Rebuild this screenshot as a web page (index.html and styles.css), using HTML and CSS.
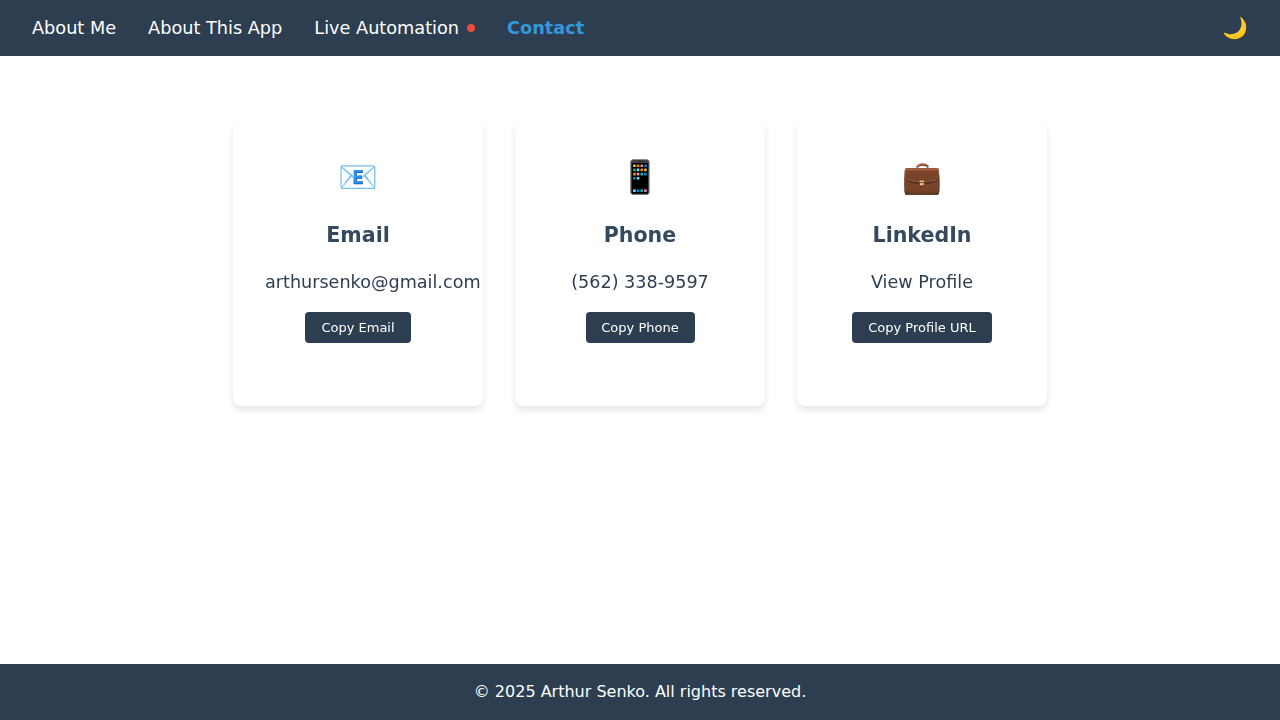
FILE: index.html
```html
<!DOCTYPE html>
<html lang="en">
<head>
<meta charset="utf-8">
<title>Contact</title>
<link rel="stylesheet" href="styles.css">
</head>
<body>
<nav class="navbar">
  <ul class="nav-links">
    <li><a class="nav-link" href="#">About Me</a></li>
    <li><a class="nav-link" href="#">About This App</a></li>
    <li><a class="nav-link" href="#">Live Automation<span class="status-dot"></span></a></li>
    <li><a class="nav-link active" href="#">Contact</a></li>
  </ul>
  <button class="theme-toggle">🌙</button>
</nav>
<main class="content">
  <div class="cards">
    <section class="card">
      <div class="card-icon">📧</div>
      <h3 class="card-title">Email</h3>
      <a class="card-value" href="#">arthursenko@gmail.com</a>
      <button class="copy-button copy-email">Copy Email</button>
    </section>
    <section class="card">
      <div class="card-icon">📱</div>
      <h3 class="card-title">Phone</h3>
      <a class="card-value" href="#">(562) 338-9597</a>
      <button class="copy-button copy-phone">Copy Phone</button>
    </section>
    <section class="card">
      <div class="card-icon">💼</div>
      <h3 class="card-title">LinkedIn</h3>
      <a class="card-value" href="#">View Profile</a>
      <button class="copy-button copy-profile">Copy Profile URL</button>
    </section>
  </div>
</main>
<footer class="footer">© 2025 Arthur Senko. All rights reserved.</footer>
</body>
</html>
```

FILE: styles.css
```css
* { box-sizing: border-box; }
body {
  margin: 0;
  min-height: 100vh;
  display: flex;
  flex-direction: column;
  font-family: "DejaVu Sans", sans-serif;
  color: #2c3e50;
  background: #fff;
}
.navbar {
  height: 56px;
  padding: 0 32px;
  display: flex;
  align-items: center;
  justify-content: space-between;
  background: #2c3e50;
}
.nav-links {
  display: flex;
  gap: 32px;
  margin: 0;
  padding: 0;
  list-style: none;
}
.nav-link {
  display: flex;
  align-items: center;
  font-size: 17.69px;
  line-height: 24px;
  color: #fff;
  text-decoration: none;
}
.nav-link.active { color: #3498db; font-weight: bold; }
.status-dot {
  width: 8px;
  height: 8px;
  margin-left: 8px;
  border-radius: 50%;
  background: #e74c3c;
}
.theme-toggle {
  padding: 0;
  border: 0;
  background: none;
  font-family: inherit;
  font-size: 20.8px;
  line-height: 24px;
}
.content { flex: 1; padding: 64px 32px 0; }
.cards { display: flex; justify-content: center; gap: 32px; }
.card {
  width: 250px;
  height: 286px;
  padding: 32px;
  display: flex;
  flex-direction: column;
  align-items: center;
  border-radius: 8px;
  background: #fff;
  box-shadow: 0 4px 6px rgba(0, 0, 0, 0.1);
  will-change: transform;
}
.card-icon { height: 51px; font-size: 32px; line-height: 51px; }
.card-title {
  margin: 16px 0;
  font-size: 20.592px;
  line-height: 32px;
  color: #34495e;
}
.card-value {
  align-self: stretch;
  text-align: center;
  font-size: 17.6px;
  line-height: 30px;
  color: #2c3e50;
  text-decoration: none;
}
.copy-button {
  margin-top: 15px;
  padding: 8px 0;
  border: 0;
  border-radius: 4px;
  background: #2c3e50;
  color: #fff;
  font-family: inherit;
  font-size: 13px;
  line-height: 15px;
  white-space: nowrap;
}
.copy-email { width: 106px; }
.copy-phone { width: 109px; }
.copy-profile { width: 140px; }
.footer {
  height: 56px;
  background: #2c3e50;
  color: #fff;
  font-size: 16px;
  line-height: 56px;
  text-align: center;
}
```
